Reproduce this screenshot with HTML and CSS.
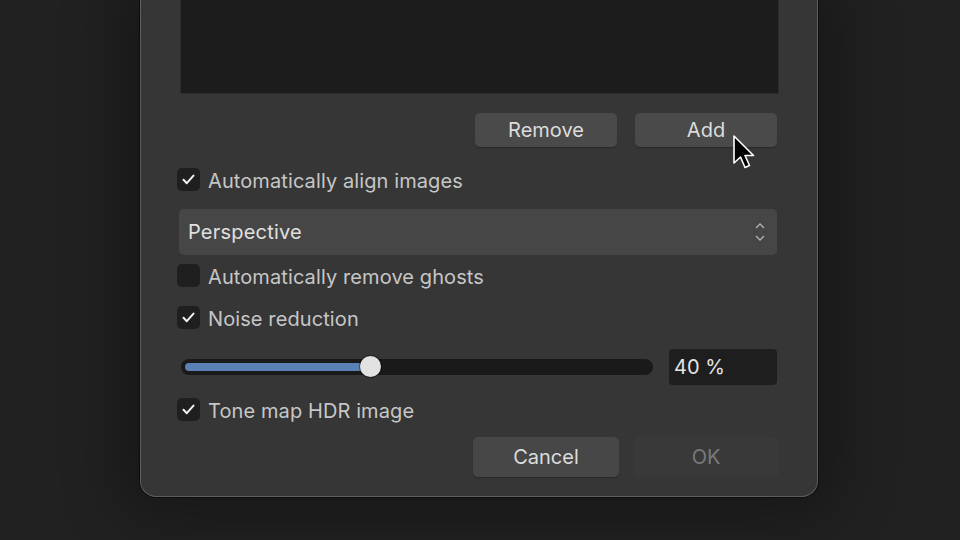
FILE: index.html
```html
<!DOCTYPE html>
<html>
<head>
<meta charset="utf-8">
<link rel="stylesheet" href="styles.css">
</head>
<body>
<div class="dialog">
  <div class="list"></div>
  <div class="btn-row">
    <div class="btn">Remove</div>
    <div class="btn">Add</div>
  </div>
  <label class="check row-align">
    <span class="box"><svg viewBox="0 0 23 23" width="23" height="23"><polyline points="6.5,11.8 9.8,15.2 16.5,7.6" fill="none" stroke="#f2f2f2" stroke-width="2" stroke-linecap="round" stroke-linejoin="round"/></svg></span>
    <span class="label">Automatically align images</span>
  </label>
  <div class="popup">
    <span>Perspective</span>
    <svg class="chev" viewBox="0 0 12 22" width="12" height="22"><polyline points="2,7 6,3 10,7" fill="none" stroke="#b0b0b0" stroke-width="1.3"/><polyline points="2,15 6,19 10,15" fill="none" stroke="#b0b0b0" stroke-width="1.3"/></svg>
  </div>
  <label class="check row-ghost">
    <span class="box"></span>
    <span class="label">Automatically remove ghosts</span>
  </label>
  <label class="check row-noise">
    <span class="box"><svg viewBox="0 0 23 23" width="23" height="23"><polyline points="6.5,11.8 9.8,15.2 16.5,7.6" fill="none" stroke="#f2f2f2" stroke-width="2" stroke-linecap="round" stroke-linejoin="round"/></svg></span>
    <span class="label">Noise reduction</span>
  </label>
  <div class="slider-row">
    <div class="track">
      <div class="fill" style="width: 40%"></div>
      <div class="thumb" style="left: 40%"></div>
    </div>
    <div class="field">40 %</div>
  </div>
  <label class="check row-tone">
    <span class="box"><svg viewBox="0 0 23 23" width="23" height="23"><polyline points="6.5,11.8 9.8,15.2 16.5,7.6" fill="none" stroke="#f2f2f2" stroke-width="2" stroke-linecap="round" stroke-linejoin="round"/></svg></span>
    <span class="label">Tone map HDR image</span>
  </label>
  <div class="footer">
    <div class="btn big">Cancel</div>
    <div class="btn big disabled">OK</div>
  </div>
</div>
<svg class="cursor" viewBox="0 0 26 38" width="26" height="38"><path d="M2 1 L2 28 L8.5 22 L13 32.5 L17.5 30.5 L13 20.5 L21.5 20.5 Z" fill="#000" stroke="#fff" stroke-width="1.6" stroke-linejoin="round"/></svg>
</body>
</html>
```
FILE: styles.css
```css
html, body {
  margin: 0;
  padding: 0;
}
body {
  width: 960px;
  height: 540px;
  overflow: hidden;
  position: relative;
  background: #212121;
  font-family: Inter, "Noto Sans", "Liberation Sans", sans-serif;
}
.dialog {
  margin-left: 140px;
  background: #363636;
  border: 1px solid #5e5e5e;
  border-top: none;
  border-radius: 0 0 16px 16px;
  box-shadow: 0 0 0 1px #0e0e0e, 0 0 60px 20px rgba(0,0,0,0.3);
  padding: 0 38px 0 36px;
  box-sizing: border-box;
  width: 678px;
  height: 497px;
  display: flex;
  flex-direction: column;
}
.list {
  height: 93px;
  margin: 0 0 0 3px;
  background: #1c1c1c;
  border: 1px solid #2c2c2c;
  border-top: none;
  flex: none;
}
.btn-row {
  display: flex;
  justify-content: flex-end;
  gap: 18px;
  padding-right: 2px;
  margin-top: 19px;
}
.btn {
  width: 142px;
  height: 34px;
  border-radius: 5px;
  background: #4a4a4a;
  color: #dcdcdc;
  font-size: 20px;
  display: flex;
  align-items: center;
  justify-content: center;
  box-shadow: 0 1px 1px rgba(0,0,0,0.25);
}
.check {
  display: flex;
  align-items: center;
  gap: 8px;
  height: 23px;
}
.box {
  width: 23px;
  height: 23px;
  border-radius: 5px;
  background: #1f1f1f;
  flex: none;
  display: block;
}
.box svg { display: block; }
.label {
  color: #c6c6c6;
  font-size: 20px;
  letter-spacing: 0.1px;
  position: relative;
  top: 1px;
}
.row-align { margin-top: 21px; }
.row-ghost { margin-top: 9px; }
.row-noise { margin-top: 19px; }
.row-tone { margin-top: 13px; }
.popup {
  margin: 18px 2px 0 2px;
  height: 46px;
  border-radius: 5px;
  background: #464646;
  display: flex;
  align-items: center;
  justify-content: space-between;
  padding: 0 11px 0 9px;
  color: #e0e0e0;
  font-size: 20px;
  letter-spacing: 0.2px;
}
.chev { display: block; }
.slider-row {
  margin: 20px 2px 0 4px;
  height: 36px;
  display: flex;
  align-items: center;
  gap: 16px;
}
.track {
  flex: 1;
  height: 16px;
  border-radius: 8px;
  background: #1a1a1a;
  position: relative;
}
.fill {
  position: absolute;
  left: 4px;
  top: 4px;
  height: 8px;
  border-radius: 4px;
  background: #5b80b4;
}
.thumb {
  position: absolute;
  top: -3px;
  width: 21px;
  height: 21px;
  margin-left: -10px;
  border-radius: 50%;
  background: #e2e2e2;
  box-shadow: 0 0 0 1px rgba(0,0,0,0.4);
}
.field {
  width: 108px;
  height: 36px;
  border-radius: 4px;
  background: #1e1e1e;
  color: #e4e4e4;
  font-size: 20px;
  display: flex;
  align-items: center;
  padding-left: 5px;
  box-sizing: border-box;
}
.footer {
  margin-top: 16px;
  display: flex;
  justify-content: flex-end;
  gap: 14px;
}
.btn.big {
  width: 146px;
  height: 40px;
  font-size: 20px;
  background: #474747;
}
.btn.big.disabled {
  background: #393939;
  color: #7a7a7a;
  box-shadow: none;
}
.cursor {
  position: absolute;
  left: 732px;
  top: 135px;
}
```
